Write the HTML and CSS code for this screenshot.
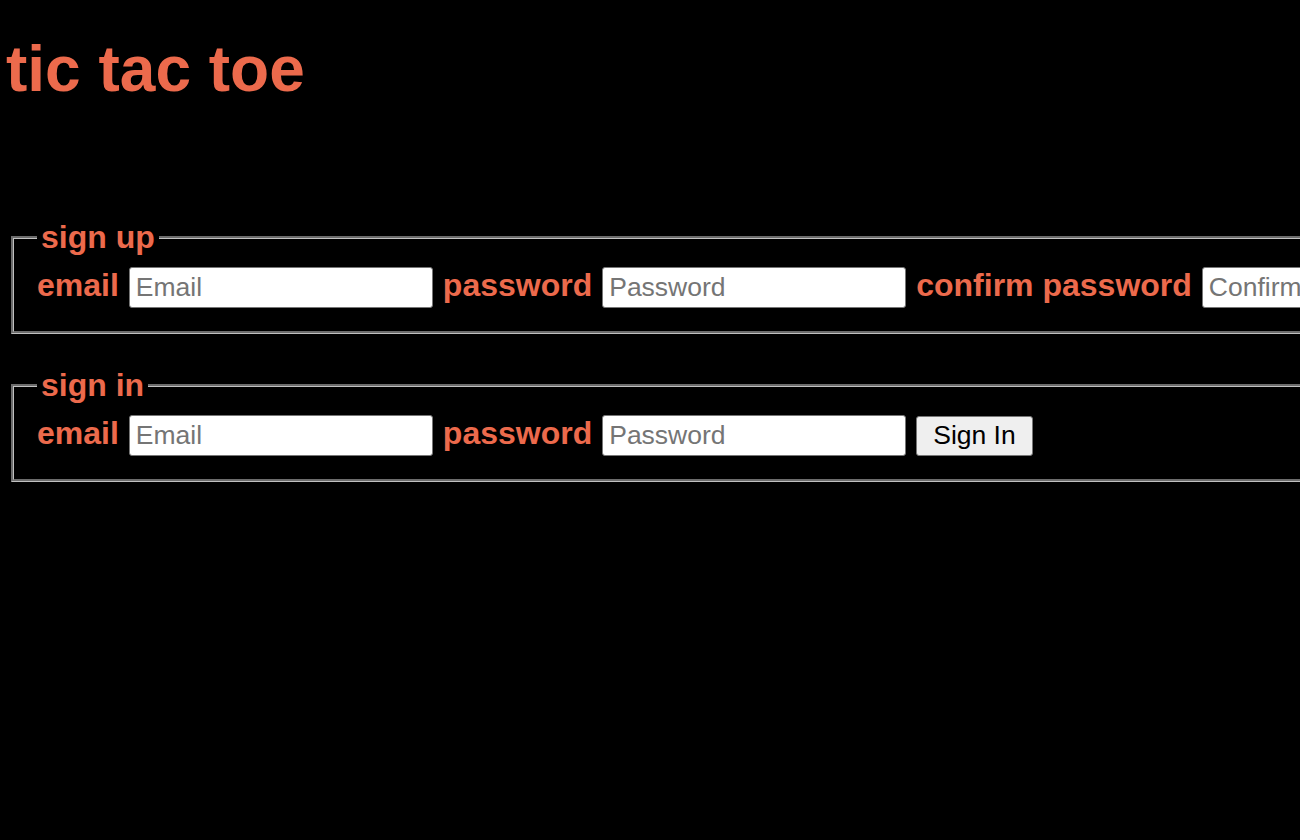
FILE: index.html
```html
<!DOCTYPE html>
<html>
  <head>
    <meta charset="UTF-8">
    <title>tic tac toe</title>
    <link rel="stylesheet" href="styles.css">
  </head>
  <body>
    <h1>tic tac toe</h1>
    <div class="forms">
      <form id="sign-up">
        <fieldset>
          <legend>sign up</legend>
          <div class="form-row">
            <label>email</label>
            <input type="text" name="email" placeholder="Email">
            <label>password</label>
            <input type="password" name="password" placeholder="Password">
            <label>confirm password</label>
            <input type="password" name="password_confirmation" placeholder="Confirm Password">
            <button type="submit">Sign Up</button>
          </div>
        </fieldset>
      </form>
      <form id="sign-in">
        <fieldset>
          <legend>sign in</legend>
          <div class="form-row">
            <label>email</label>
            <input type="text" name="email" placeholder="Email">
            <label>password</label>
            <input type="password" name="password" placeholder="Password">
            <button type="submit">Sign In</button>
          </div>
        </fieldset>
      </form>
    </div>
  </body>
</html>
```

FILE: styles.css
```css
* {
  box-sizing: border-box;
}
html {
  overflow: hidden;
}
body {
  margin: 0;
  padding: 0 6px;
  background-color: black;
  font-family: "Liberation Sans", Arial, sans-serif;
  color: #ec6a4c;
}
h1 {
  font-size: 64px;
  font-weight: bold;
  margin: 32px 0 113px;
}
.forms {
  width: 1800px;
}
form {
  margin-bottom: 33px;
}
fieldset {
  margin: 0 0 0 5px;
  padding: 11px 24px 23px 23px;
  border: 3px groove rgb(192, 192, 192);
}
legend {
  font-size: 32px;
  font-weight: bold;
  padding: 0 4px;
  margin-left: 0;
}
label {
  font-size: 32px;
  font-weight: bold;
  white-space: nowrap;
}
.form-row {
  display: flex;
  align-items: baseline;
  gap: 10px;
}
input {
  width: 304px;
  height: 41px;
  font-family: "Liberation Sans", Arial, sans-serif;
  font-size: 26.5px;
  padding: 0 6px;
  border: 1px solid #767676;
  border-radius: 3px;
  background-color: white;
  color: black;
}
input::placeholder {
  color: #757575;
}
button {
  height: 40px;
  font-family: "Liberation Sans", Arial, sans-serif;
  font-size: 26.5px;
  padding: 0 16px;
  border: 1px solid #767676;
  border-radius: 3px;
  background-color: #efefef;
  color: black;
}
```
